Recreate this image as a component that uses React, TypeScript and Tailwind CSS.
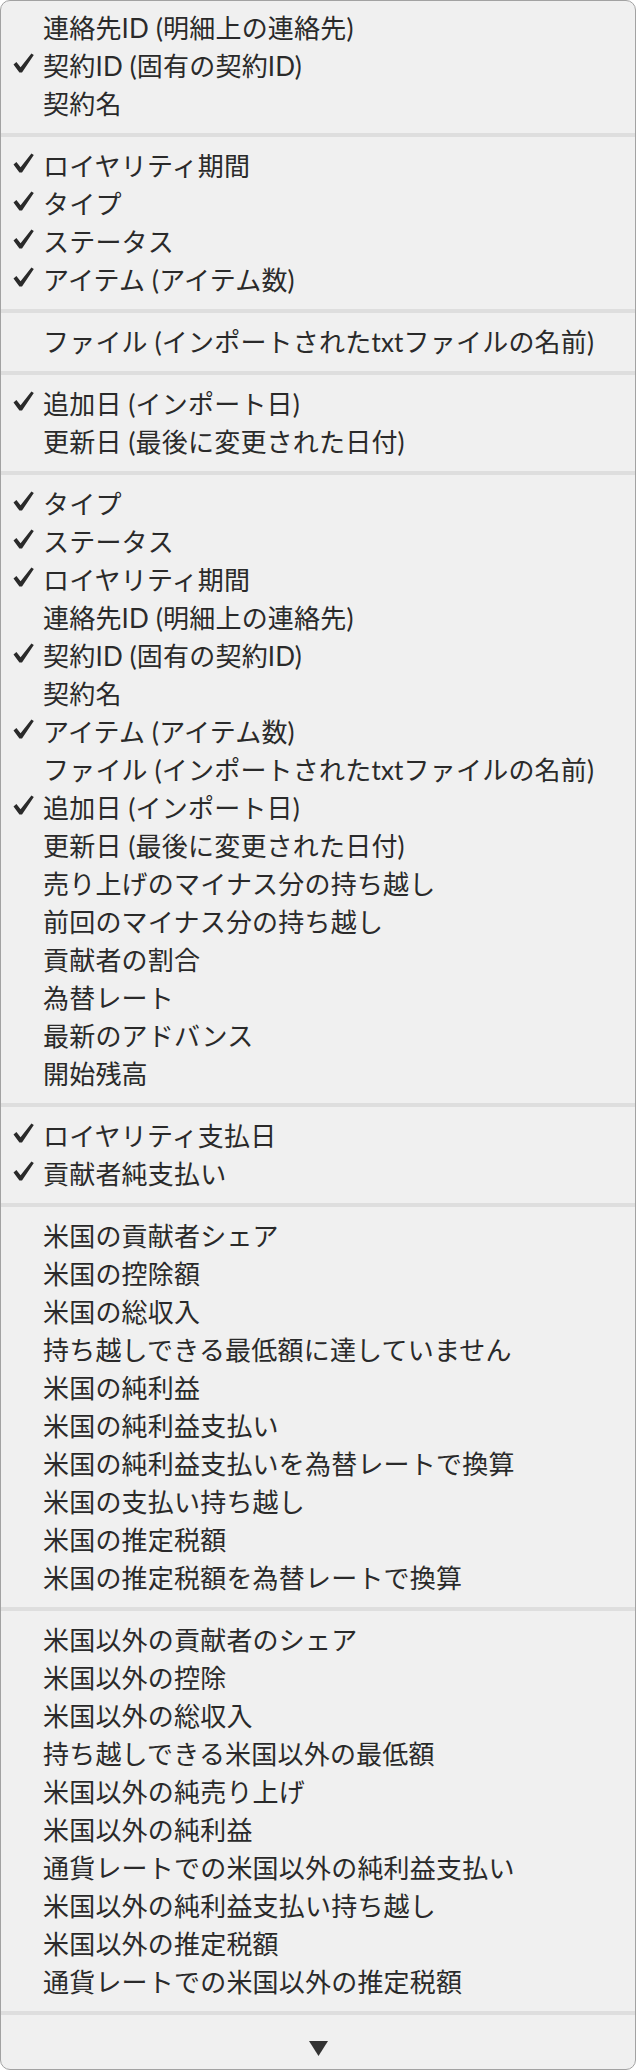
type Item = { label: string; checked?: boolean };

const sections: Item[][] = [
  [
    { label: "連絡先ID (明細上の連絡先)" },
    { label: "契約ID (固有の契約ID)", checked: true },
    { label: "契約名" },
  ],
  [
    { label: "ロイヤリティ期間", checked: true },
    { label: "タイプ", checked: true },
    { label: "ステータス", checked: true },
    { label: "アイテム (アイテム数)", checked: true },
  ],
  [{ label: "ファイル (インポートされたtxtファイルの名前)" }],
  [
    { label: "追加日 (インポート日)", checked: true },
    { label: "更新日 (最後に変更された日付)" },
  ],
  [
    { label: "タイプ", checked: true },
    { label: "ステータス", checked: true },
    { label: "ロイヤリティ期間", checked: true },
    { label: "連絡先ID (明細上の連絡先)" },
    { label: "契約ID (固有の契約ID)", checked: true },
    { label: "契約名" },
    { label: "アイテム (アイテム数)", checked: true },
    { label: "ファイル (インポートされたtxtファイルの名前)" },
    { label: "追加日 (インポート日)", checked: true },
    { label: "更新日 (最後に変更された日付)" },
    { label: "売り上げのマイナス分の持ち越し" },
    { label: "前回のマイナス分の持ち越し" },
    { label: "貢献者の割合" },
    { label: "為替レート" },
    { label: "最新のアドバンス" },
    { label: "開始残高" },
  ],
  [
    { label: "ロイヤリティ支払日", checked: true },
    { label: "貢献者純支払い", checked: true },
  ],
  [
    { label: "米国の貢献者シェア" },
    { label: "米国の控除額" },
    { label: "米国の総収入" },
    { label: "持ち越しできる最低額に達していません" },
    { label: "米国の純利益" },
    { label: "米国の純利益支払い" },
    { label: "米国の純利益支払いを為替レートで換算" },
    { label: "米国の支払い持ち越し" },
    { label: "米国の推定税額" },
    { label: "米国の推定税額を為替レートで換算" },
  ],
  [
    { label: "米国以外の貢献者のシェア" },
    { label: "米国以外の控除" },
    { label: "米国以外の総収入" },
    { label: "持ち越しできる米国以外の最低額" },
    { label: "米国以外の純売り上げ" },
    { label: "米国以外の純利益" },
    { label: "通貨レートでの米国以外の純利益支払い" },
    { label: "米国以外の純利益支払い持ち越し" },
    { label: "米国以外の推定税額" },
    { label: "通貨レートでの米国以外の推定税額" },
  ],
];

function Check() {
  return (
    <svg width="21" height="20" viewBox="0 0 21 20" className="-mt-[6px]">
      <path d="M0.5 11.5 L3.4 9 L7.6 14.2 L18.4 0.4 L20.8 2 L9 19.6 L6.4 19.6 Z" fill="#2a2a2a" />
    </svg>
  );
}

function MenuRow({ item }: { item: Item }) {
  return (
    <div className="flex h-[38px] items-center pl-[12px]">
      <div className="flex w-[30px] shrink-0 items-center">{item.checked && <Check />}</div>
      <span className="whitespace-nowrap text-[26px] leading-none tracking-[0.2px] text-[#2a2a2a]">
        {item.label}
      </span>
    </div>
  );
}

export default function App() {
  return (
    <div className="h-[2070px] w-[636px] bg-white">
      <div
        className="flex h-full flex-col overflow-hidden rounded-[10px] border border-[#a2a2a2] bg-[#f0f0f0]"
        style={{ fontFamily: '"Lato", "Noto Sans CJK JP", sans-serif' }}
      >
        {sections.map((section, i) => (
          <div key={i}>
            <div className={i === 0 ? "pt-[8px] pb-[10px]" : "py-[10px]"}>
              {section.map((item, j) => (
                <MenuRow key={j} item={item} />
              ))}
            </div>
            <div className="h-[4px] bg-[#dedede]" />
          </div>
        ))}
        {/* scroll arrow */}
        <div className="flex flex-1 items-center justify-center pt-[12px]">
          <svg width="19" height="15" viewBox="0 0 19 15">
            <polygon points="0,0 19,0 9.5,15" fill="#333" />
          </svg>
        </div>
      </div>
    </div>
  );
}
